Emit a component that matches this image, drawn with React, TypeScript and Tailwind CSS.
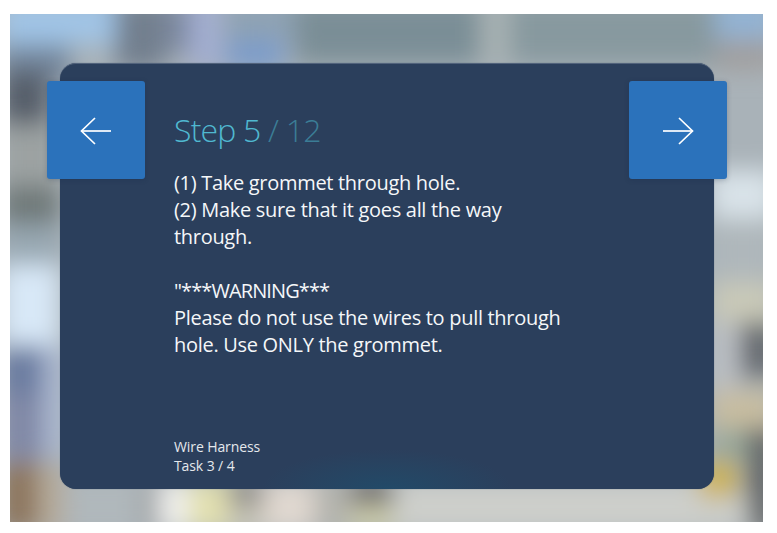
const BLOBS: [number, number, number, number, string][] = [
  // top strip
  [0, 0, 120, 44, "#a0c4e6"],
  [0, 44, 70, 40, "#76889e"],
  [115, 0, 50, 70, "#727f8e"],
  [165, 0, 25, 54, "#7e8aa0"],
  [190, 0, 30, 70, "#a3aed2"],
  [225, 40, 60, 30, "#7b9ccb"],
  [225, 0, 70, 40, "#8ea2b4"],
  [295, 0, 185, 64, "#7a8e96"],
  [480, 0, 30, 64, "#a8b2b4"],
  [510, 0, 205, 64, "#87999f"],
  [715, 0, 62, 39, "#92b3d4"],
  [715, 39, 62, 31, "#a09f9f"],
  // left edge
  [0, 70, 50, 55, "#575f6b"],
  [0, 125, 60, 60, "#9ca2a2"],
  [0, 185, 60, 40, "#6f7979"],
  [0, 225, 60, 40, "#98a8b2"],
  [0, 265, 60, 80, "#d8e8f7"],
  [44, 345, 20, 110, "#aebbd4"],
  [0, 345, 44, 50, "#6a7ca0"],
  [0, 395, 44, 65, "#8088a6"],
  // right edge
  [710, 170, 67, 48, "#d9e3e9"],
  [710, 218, 67, 64, "#afb7bb"],
  [710, 282, 67, 40, "#c9c9b8"],
  [740, 322, 37, 55, "#63676d"],
  [710, 322, 30, 68, "#bcc0c4"],
  [710, 390, 67, 38, "#c8bda0"],
  [710, 428, 38, 36, "#9aa89c"],
  [748, 428, 29, 105, "#5f6263"],
  // bottom strip
  [0, 462, 38, 71, "#8c745c"],
  [38, 465, 27, 68, "#b5aa9a"],
  [65, 480, 75, 53, "#b0b8bc"],
  [140, 480, 20, 53, "#a2a6a8"],
  [160, 480, 28, 53, "#f0f0ee"],
  [188, 480, 40, 53, "#e2e0b0"],
  [228, 480, 36, 28, "#94928c"],
  [228, 508, 36, 25, "#c8c6b8"],
  [264, 480, 50, 53, "#e0d8d0"],
  [314, 480, 36, 53, "#b4b4ae"],
  [350, 480, 44, 26, "#73716f"],
  [350, 506, 44, 27, "#cbcbaa"],
  [394, 480, 306, 53, "#cdcfcb"],
  [700, 462, 36, 36, "#cfb350"],
  [700, 498, 48, 35, "#cbcdca"],
];

function BlurredPhoto() {
  return (
    <svg className="absolute inset-0 h-full w-full" viewBox="0 0 753 508" preserveAspectRatio="none">
      <defs>
        <filter id="photo-blur" filterUnits="userSpaceOnUse" x="-60" y="-60" width="900" height="650">
          <feGaussianBlur stdDeviation="12" />
        </filter>
      </defs>
      <rect width="753" height="508" fill="#a9b2b8" />
      <g filter="url(#photo-blur)">
        <g transform="translate(-10 -14)">
          {BLOBS.map(([x, y, w, h, fill]) => (
            <rect key={`${x}-${y}`} x={x} y={y} width={w} height={h} fill={fill} />
          ))}
        </g>
      </g>
    </svg>
  );
}

function NavButton({ side }: { side: "left" | "right" }) {
  const isLeft = side === "left";
  return (
    <button
      type="button"
      className={`absolute top-[17px] flex h-[98px] w-[98px] items-center justify-center rounded-[3px] bg-[#2b72bb] shadow-[0_1px_5px_rgba(20,40,70,0.25)] ${
        isLeft ? "left-[-13px]" : "right-[-13px]"
      }`}
    >
      <svg className="mt-[2px]" width="32" height="30" viewBox="0 0 32 30" fill="none" stroke="#ffffff" strokeWidth="1.7">
        {isLeft ? (
          <>
            <path d="M1.5 15H31" />
            <path d="M15 2L1.5 15L15 28" />
          </>
        ) : (
          <>
            <path d="M1 15H30.5" />
            <path d="M17 2L30.5 15L17 28" />
          </>
        )}
      </svg>
    </button>
  );
}

export default function App() {
  return (
    <main className="min-h-screen bg-white pt-[14px] pl-[10px] font-['Open_Sans',sans-serif]">
      <section className="relative h-[508px] w-[753px] overflow-hidden">
        <BlurredPhoto />
        <div className="relative pt-[49px] pl-[50px]">
          <article className="relative flex h-[426px] w-[654px] flex-col rounded-[16px] border-t border-[#52637c] bg-[#2b3f5c] pl-[114px] shadow-[0_0_1px_rgba(43,63,92,0.8)]">
            <div className="absolute inset-x-[200px] bottom-0 h-[40px] bg-[radial-gradient(ellipse_at_bottom,#224a68,transparent_70%)]" />
            <NavButton side="left" />
            <NavButton side="right" />
            <h1 className="relative mt-[44px] text-[32px] leading-[44px] font-light tracking-[-0.8px] text-[#50b8d0]">
              Step 5 <span className="text-[#3b7d96]">/ 12</span>
            </h1>
            <div className="relative mt-[17px] w-[395px] text-[20px] leading-[27px] tracking-[-0.3px] text-[#f5f7f9]">
              <p>(1) Take grommet through hole.</p>
              <p>(2) Make sure that it goes all the way through.</p>
              <p className="mt-[27px] tracking-[-0.9px]">"***WARNING***</p>
              <p>Please do not use the wires to pull through hole. Use ONLY the grommet.</p>
            </div>
            <div className="relative mt-auto mb-[14px] text-[14px] leading-[19px] tracking-[-0.1px] text-[#e4e8ec]">
              <p>Wire Harness</p>
              <p>Task 3 / 4</p>
            </div>
          </article>
        </div>
      </section>
    </main>
  );
}
